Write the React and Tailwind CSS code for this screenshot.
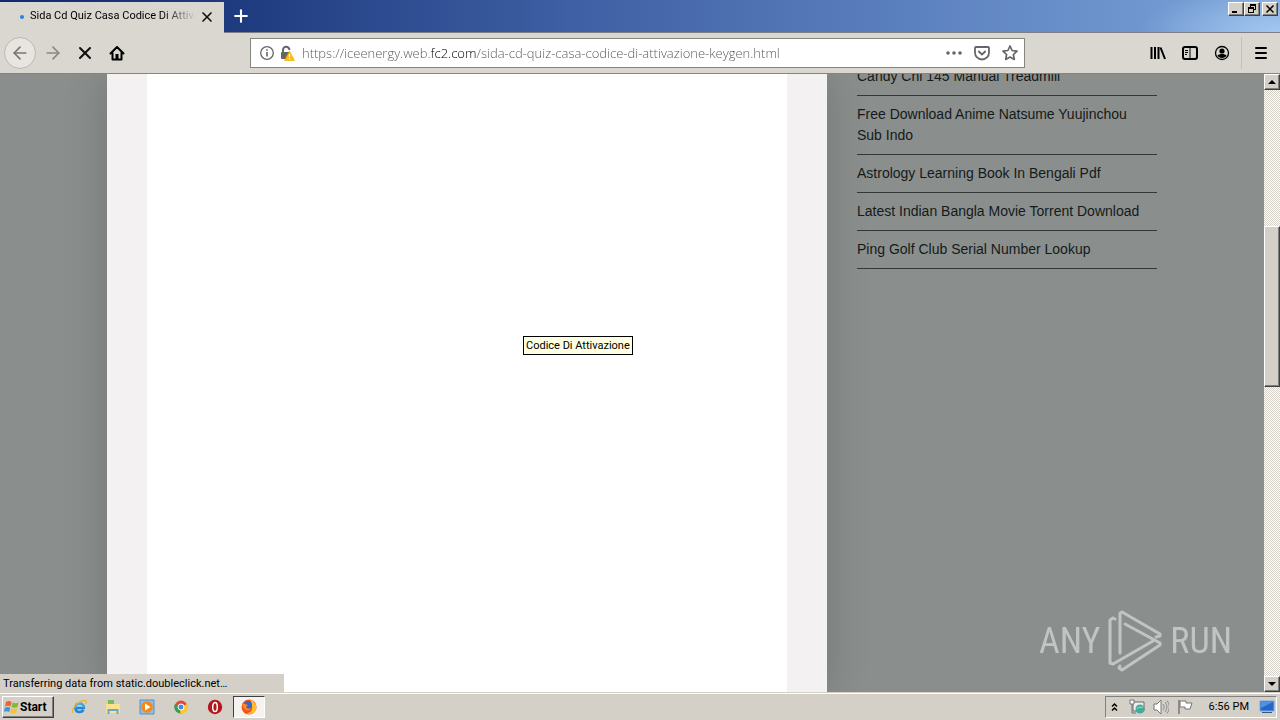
import React, { useState } from 'react';
import { ArrowLeft, ArrowRight, X, Plus } from 'lucide-react';

const posts = [
    'Candy Chl 145 Manual Treadmill',
    'Free Download Anime Natsume Yuujinchou Sub Indo',
    'Astrology Learning Book In Bengali Pdf',
    'Latest Indian Bangla Movie Torrent Download',
    'Ping Golf Club Serial Number Lookup',
];

const raised = 'border border-t-white border-l-white border-r-[#404040] border-b-[#404040] bg-[#d4d0c8] shadow-[inset_-1px_-1px_0_#808080]';

const WindowButton = ({ label, children }) => (
    <button aria-label={label} className={`flex h-[14px] w-4 items-center justify-center ${raised}`}>
        <svg viewBox="0 0 12 10" className="h-[10px] w-3" fill="none" stroke="#000" shapeRendering="crispEdges">{children}</svg>
    </button>
);

const TitleBar = () => (
    <header className="flex h-[33px] shrink-0 items-start bg-[radial-gradient(ellipse_140px_50px_at_100%_100%,#a3c8f0,transparent),linear-gradient(to_right,#0f2a70,#213d82_20%,#3f60a4_45%,#5d82c0_72%,#7ba3d8)]">
        <div className="mt-[2px] flex h-[31px] w-[224px] shrink-0 items-center bg-[#dad7d1] pb-[2px] pl-5 pr-[9px]">
            <span className="mr-[6px] size-1 shrink-0 rounded-full bg-[#2a80e0]"></span>
            <span className="w-[166px] overflow-hidden whitespace-nowrap text-[11px] text-black [mask-image:linear-gradient(to_right,#000_80%,transparent)]">Sida Cd Quiz Casa Codice Di Attivazione</span>
            <button aria-label="Close tab" className="ml-auto"><X size={16} strokeWidth={2.5} color="#111" /></button>
        </div>
        <div className="flex h-[33px] flex-1 items-start border-b border-[#7d7f83]">
            <button aria-label="New tab" className="flex h-8 w-[34px] items-center justify-center"><Plus size={20} strokeWidth={2.5} color="#fff" /></button>
            <div className="ml-auto mr-[2px] mt-[2px] flex">
                <WindowButton label="Minimize"><path d="M2 8.5h5M2 7.5h5" /></WindowButton>
                <WindowButton label="Restore"><path d="M4 1.5h6M4.500 1v3M9.500 1v5M8 5.500h2M2 4.500h6M2.500 4v5M7.500 4v5M2 8.500h6M4 .5h6M2 3.500h6" /></WindowButton>
                <div className="w-[2px]"></div>
                <WindowButton label="Close"><path d="M2.500 1.500l7 7M9.500 1.500l-7 7" strokeWidth="1.500" shapeRendering="auto" /></WindowButton>
            </div>
        </div>
    </header>
);

const Toolbar = () => {
    const [url, setUrl] = useState('https://iceenergy.web.fc2.com/sida-cd-quiz-casa-codice-di-attivazione-keygen.html');

    return (
        <nav className="flex h-[41px] shrink-0 items-center border-b border-[#85857f] bg-[#dad7d1]">
            <div className="flex w-[250px] shrink-0 items-center pl-1">
                <button aria-label="Back" className="flex size-8 items-center justify-center rounded-full border border-[#bbb8b2] bg-[#e8e5e1]"><ArrowLeft size={20} color="#77756f" /></button>
                <button aria-label="Forward" className="flex h-8 w-[34px] items-center justify-center"><ArrowRight size={20} color="#8a8883" /></button>
                <button aria-label="Stop" className="flex h-8 w-[30px] items-center justify-center"><X size={20} strokeWidth={2.500} color="#111" /></button>
                <button aria-label="Home" className="flex h-8 w-[34px] items-center justify-center">
                    <svg viewBox="0 0 16 16" className="size-4"><path d="M1.500 8.500L8 2l6.500 6.500M3.500 8v6.500h9V8" fill="none" stroke="#000" strokeWidth="2" strokeLinejoin="round" strokeLinecap="round" /><path d="M6.500 14V9h3v5z" /></svg>
                </button>
            </div>
            <div className="flex h-[30px] min-w-0 flex-1 items-center border border-[#85857f] bg-white pl-2 pr-[6px]">
                <svg viewBox="0 0 16 16" className="size-4 shrink-0" fill="none" stroke="#666"><circle cx="8" cy="8" r="6.300" strokeWidth="1.300" /><path d="M8 7v4.500M8 4.200v1.600" strokeWidth="1.600" /></svg>
                <svg viewBox="0 0 16 16" className="ml-1 size-4 shrink-0">
                    <path d="M4 8V5a3.200 3.200 0 0 1 6.400 0" fill="none" stroke="#666" strokeWidth="2" /><rect x="2" y="7" width="9" height="7" rx="1" fill="#666" />
                    <path d="M10.500 6l5 9.500h-10z" fill="#ffbf00" stroke="#e5a000" strokeWidth=".5" /><path d="M10.500 9v3M10.500 13v1.200" stroke="#fff" strokeWidth="1.300" />
                </svg>
                <input
                    aria-label="Address"
                    value={url}
                    onChange={(e) => setUrl(e.target.value)}
                    className="ml-[7px] mt-[2px] min-w-0 flex-1 bg-[linear-gradient(to_right,#555_128px,#000_128px,#000_175px,#555_175px)] bg-clip-text font-['Open_Sans'] text-[13px] font-light text-transparent outline-none"
                />
                <button aria-label="Page actions" className="mr-3 shrink-0"><svg viewBox="0 0 16 16" className="size-4" fill="#666"><circle cx="2" cy="8" r="1.800" /><circle cx="8" cy="8" r="1.800" /><circle cx="14" cy="8" r="1.800" /></svg></button>
                <button aria-label="Save to Pocket" className="mr-3 shrink-0"><svg viewBox="0 0 16 16" className="size-4" fill="none" stroke="#666" strokeWidth="1.800" strokeLinecap="round" strokeLinejoin="round"><path d="M2 2h12a1 1 0 0 1 1 1v4.500a7 7 0 0 1-14 0V3a1 1 0 0 1 1-1z" /><path d="M4.800 6.500L8 9.500l3.200-3" /></svg></button>
                <button aria-label="Bookmark" className="shrink-0"><svg viewBox="0 0 16 16" className="size-4" fill="none" stroke="#666" strokeWidth="1.700" strokeLinejoin="round"><path d="M8 1l2.100 4.500 4.900.6-3.600 3.400.9 4.900L8 12l-4.300 2.400.9-4.900L1 6.100l4.900-.6z" /></svg></button>
            </div>
            <div className="flex w-[255px] shrink-0 items-center justify-end">
                <button aria-label="Library" className="flex size-8 items-center justify-center"><svg viewBox="0 0 16 16" className="size-4" stroke="#000" strokeWidth="2"><path d="M1.500 2v12M5 2v12M8.500 2v12M10.500 2.500L15 14" /></svg></button>
                <button aria-label="Sidebars" className="flex size-8 items-center justify-center"><svg viewBox="0 0 16 16" className="size-4" fill="none" stroke="#000"><rect x="1" y="2" width="14" height="12" rx="2" strokeWidth="2" /><path d="M8 2v12M3 5.500h3M3 7.500h3M3 9.500h2" /></svg></button>
                <button aria-label="Account" className="flex size-8 items-center justify-center"><svg viewBox="0 0 16 16" className="size-4"><circle cx="8" cy="8" r="6.500" fill="none" stroke="#000" strokeWidth="1.300" /><circle cx="8" cy="6" r="2.600" /><path d="M3.500 10.500c2-2 7-2 9 0-1 3.200-8 3.200-9 0z" /></svg></button>
                <div className="ml-[3px] flex h-8 items-center border-l border-[#c4c1bb] px-[11px]">
                    <button aria-label="Menu"><svg viewBox="0 0 16 16" className="size-4" stroke="#000" strokeWidth="2" strokeLinecap="round"><path d="M3 3h10M3 8h10M3 13h10" /></svg></button>
                </div>
            </div>
        </nav>
    );
};

const Watermark = () => (
    <div className="absolute bottom-5 right-12 flex items-center gap-2 text-[36px] leading-[60px] text-[#d0d2d1] opacity-80 font-['Roboto_Condensed','Open_Sans_Condensed','Roboto',sans-serif]">
        <span>ANY</span>
        <svg viewBox="0 0 54 62" className="h-[62px] w-[54px]" fill="none" stroke="currentColor" strokeWidth="3" strokeLinejoin="round" strokeLinecap="round">
            <path d="M7 9L5 8 2 10v43l3 1 40-23" />
            <path d="M12 43V3l2-1 38 22v2l-4 1" />
            <path d="M17 14l35 19v2L14 60l-3-2 1-2" />
        </svg>
        <span>RUN</span>
    </div>
);

const Scrollbar = () => (
    <div className="flex w-4 shrink-0 flex-col bg-[repeating-conic-gradient(#fff_0_25%,#d4d0c8_0_50%)] bg-size-[2px_2px]">
        <button aria-label="Scroll up" className={`flex h-4 items-center justify-center ${raised}`}><svg viewBox="0 0 8 4" className="h-1 w-2"><path d="M4 0l4 4H0z" /></svg></button>
        <div className="grow-[136]"></div>
        <div className={`grow-[160] ${raised}`}></div>
        <div className="grow-[290]"></div>
        <button aria-label="Scroll down" className={`flex h-4 items-center justify-center ${raised}`}><svg viewBox="0 0 8 4" className="h-1 w-2"><path d="M0 0h8L4 4z" /></svg></button>
    </div>
);

const Page = () => (
    <div className="relative flex min-h-0 flex-1 overflow-hidden">
        <main className="flex min-w-0 flex-1 justify-center overflow-hidden bg-[#8a8f8d]">
            <article className="w-[720px] bg-[#f4f1f2] px-10 shadow-[0_0_40px_rgba(0,0,0,0.18)]">
                <div className="h-full bg-white"></div>
            </article>
            <aside className="ml-[30px] w-[300px]">
                <ul className="-mt-4 text-[14px] leading-[21px] font-['Liberation_Sans',sans-serif]">
                    {posts.map(post => (
                        <li key={post} className="border-b border-[#333736] py-2 pr-3"><a href="#" className="text-[#151a19]">{post}</a></li>
                    ))}
                </ul>
            </aside>
        </main>
        <Scrollbar />
        <div role="tooltip" className="absolute left-[523px] top-[262px] border border-black bg-[#ffffe1] px-[2px] text-[11px] leading-[17px]">Codice Di Attivazione</div>
        <div role="status" className="absolute bottom-0 left-0 h-[18px] w-[284px] bg-[#d4d0c8] pl-[3px] text-[11px] leading-5">Transferring data from static.doubleclick.net…</div>
        <Watermark />
    </div>
);

const apps = [
    { name: 'Internet Explorer', icon: <><path d="M14 9H4.500c0 5 6 5 8 2" fill="none" stroke="#2387d8" strokeWidth="2.600" /><path d="M4.500 9c0-6 8-6 8.500-.5" fill="none" stroke="#39a7ef" strokeWidth="2.600" /><path d="M2 14C-1 10 11-1 15 2c1 1 0 2-.5 3" fill="none" stroke="#e9b52c" strokeWidth="1.200" /></> },
    { name: 'Explorer', icon: <><path d="M1 2h5l1 2h7v10H1z" fill="#f0ce62" /><path d="M3 1h6v4H3z" fill="#75bb6a" /><path d="M1 5h14v9H1z" fill="#f9e28f" /><path d="M3.500 15v-4h9v4" fill="none" stroke="#63a9d8" strokeWidth="2" /></> },
    { name: 'Media Player', icon: <><path d="M1 1h14v14H1z" fill="#8fbde8" stroke="#5a8fc8" /><circle cx="8" cy="8" r="5.800" fill="#f28a13" /><path d="M6 4.500L11.500 8 6 11.500z" fill="#fff" /></> },
    { name: 'Chrome', icon: <><circle cx="8" cy="8" r="6.500" fill="#e6493a" /><path d="M8 8L2 5a6.500 6.500 0 0 0 5 9.400z" fill="#2fa354" /><path d="M8 8l6-3a6.500 6.500 0 0 1-7 9.400z" fill="#fbcb2e" /><circle cx="8" cy="8" r="3" fill="#4a87e8" stroke="#fff" /></> },
    { name: 'Opera', icon: <><circle cx="8" cy="8" r="7.200" fill="#b3161b" /><ellipse cx="8" cy="8" rx="2.300" ry="4.500" fill="none" stroke="#fff" strokeWidth="1.500" /></> },
    { name: 'Firefox', icon: <><circle cx="8" cy="8" r="7.500" fill="#f5501f" /><path d="M9 .5c5 2 8 7 5.500 11.500-2 3-6 4-9 2 5 0 8-4 3.500-13.500z" fill="#ffc328" /><circle cx="7" cy="6" r="4" fill="#3d62c8" /><path d="M1 4l3 1 3 1-2 2c1 2 3 2 5 1-2 4-8 3-9-5z" fill="#ff8a16" /></> },
];

const Taskbar = () => (
    <footer className="flex h-7 shrink-0 items-center bg-[#d4d0c8] pl-[2px] pr-[3px] shadow-[inset_0_1px_0_#d4d0c8,inset_0_2px_0_#fff]">
        <button className={`mt-[2px] flex h-[22px] w-[52px] items-center pl-px text-[12px] font-bold ${raised}`}>
            <svg viewBox="0 0 16 16" className="size-4"><path d="M2 3c2-1.500 4-1 5.500 0L6.500 7.500C5 6.500 3 6.500 1 7.500z" fill="#ec6335" /><path d="M8.500 3.500c2 1 4 1 6 0l-1 4.500c-2 1-4 1-6 0z" fill="#81b93b" /><path d="M.8 8.800c2-1 4-1 5.500 0L5.200 13c-2-1-3.500-1-5.200 0z" fill="#4392d5" /><path d="M7.200 9.200c2 1 4 1 6 0l-1 4.500c-2 1-4 1-6 0z" fill="#f4c32e" /></svg>
            Start
        </button>
        <div className="ml-[9px] mt-[2px] flex items-center gap-[2px]">
            {apps.map(app => (
                <button key={app.name} aria-label={app.name} className={`flex h-[22px] w-8 items-center justify-center border ${app.name === 'Firefox' ? 'border-t-[#404040] border-l-[#404040] border-r-white border-b-white bg-[#f4f3f1]' : 'border-transparent'}`}>
                    <svg viewBox="0 0 16 16" className="size-4">{app.icon}</svg>
                </button>
            ))}
        </div>
        <div className="ml-auto mt-[2px] flex h-[22px] items-center border border-t-[#808080] border-l-[#808080] border-r-white border-b-white pl-1 pr-px">
            <button aria-label="Show hidden icons" className="mr-[10px] w-[9px]"><svg viewBox="0 0 9 10" className="h-[10px] w-[9px]" fill="none" stroke="#000" strokeWidth="1.500"><path d="M2 4.500L4.500 2 7 4.500M2 8.500L4.500 6 7 8.500" /></svg></button>
            <svg viewBox="0 0 16 16" className="size-4"><path d="M4 3h11v9H4z" fill="#e9f0ee" stroke="#686868" /><circle cx="11" cy="10" r="4.500" fill="#46aa98" /><path d="M8 10c2-3 4-1 6-2" stroke="#b6e5c5" fill="none" /><path d="M1 1h4v4H1z" fill="#fff" stroke="#777" /><path d="M3 5v9h4" fill="none" stroke="#777" /></svg>
            <svg viewBox="0 0 16 16" className="ml-2 size-4"><path d="M1 5h3l4-4v14l-4-4H1z" fill="#fff" stroke="#777" /><path d="M10 5c1.500 2 1.500 4 0 6M12 3c2.500 3 2.500 7 0 10M14 1.500c3 4 3 9 0 13" fill="none" stroke="#888" /></svg>
            <svg viewBox="0 0 16 16" className="ml-2 size-4"><path d="M2 1v14" stroke="#777" strokeWidth="1.500" /><path d="M3 2h6v2h6l-2 6H8V8H3z" fill="#fff" stroke="#777" /></svg>
            <span className="ml-4 whitespace-nowrap text-[11px]">6:56 PM</span>
            <svg viewBox="0 0 16 16" className="ml-[10px] size-4"><path d="M1 2h14v10H1z" fill="#2467c5" stroke="#7ba7dc" /><path d="M2 3h12L2 9z" fill="#4e92e4" /><path d="M3 13.500h10" stroke="#34548a" /></svg>
        </div>
    </footer>
);

const App = () => (
    <div className="flex h-screen flex-col overflow-hidden font-['Roboto',sans-serif] text-black">
        <TitleBar />
        <Toolbar />
        <Page />
        <Taskbar />
    </div>
);

export default App;
